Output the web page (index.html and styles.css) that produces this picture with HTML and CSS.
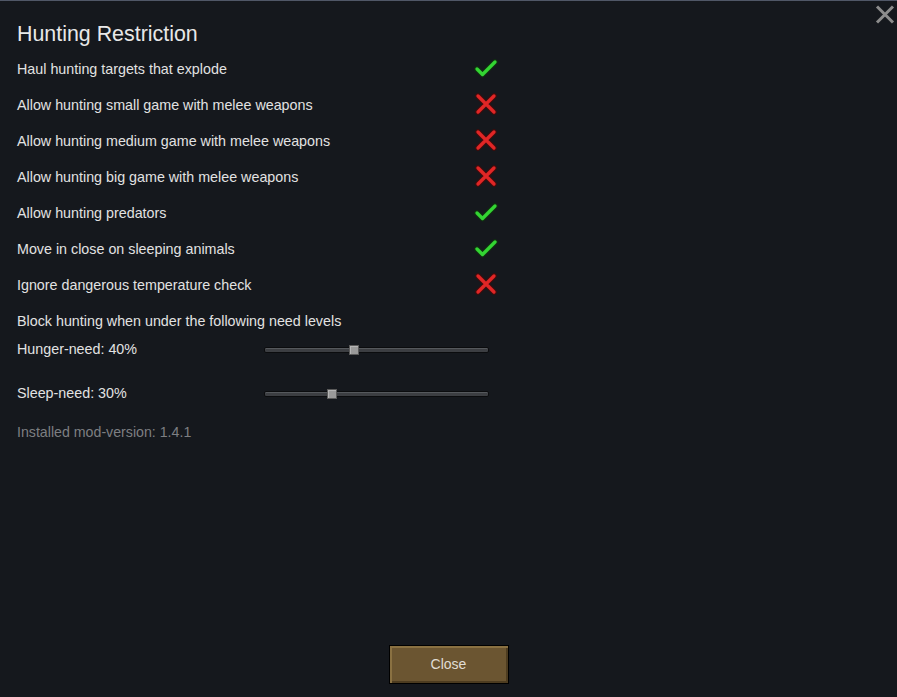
FILE: index.html
```html
<!DOCTYPE html>
<html>
<head>
<meta charset="utf-8">
<link rel="stylesheet" href="styles.css">
</head>
<body>
<div class="window">
  <button class="close-x" aria-label="close">
    <svg width="20" height="19" viewBox="0 0 20 19"><path d="M2 1.5 L18 17.5 M18 1.5 L2 17.5" stroke="#8c8c8c" stroke-width="3" fill="none"/></svg>
  </button>
  <h1 class="title">Hunting Restriction</h1>
  <div class="options">
    <div class="row"><span>Haul hunting targets that explode</span><span class="icon ok"></span></div>
    <div class="row"><span>Allow hunting small game with melee weapons</span><span class="icon no"></span></div>
    <div class="row"><span>Allow hunting medium game with melee weapons</span><span class="icon no"></span></div>
    <div class="row"><span>Allow hunting big game with melee weapons</span><span class="icon no"></span></div>
    <div class="row"><span>Allow hunting predators</span><span class="icon ok"></span></div>
    <div class="row"><span>Move in close on sleeping animals</span><span class="icon ok"></span></div>
    <div class="row"><span>Ignore dangerous temperature check</span><span class="icon no"></span></div>
    <div class="row"><span>Block hunting when under the following need levels</span></div>
  </div>
  <div class="slider-row hunger"><span class="label">Hunger-need: 40%</span><div class="track"><div class="thumb" style="left: 40%"></div></div></div>
  <div class="slider-row sleep"><span class="label">Sleep-need: 30%</span><div class="track"><div class="thumb" style="left: 30%"></div></div></div>
  <div class="version">Installed mod-version: 1.4.1</div>
  <div class="spacer"></div>
  <div class="footer"><button class="close-btn">Close</button></div>
</div>
</body>
</html>
```
FILE: styles.css
```css
html, body {
  margin: 0;
  padding: 0;
  background: #15181d;
}
body {
  font-family: "Liberation Sans", Arial, sans-serif;
  color: #e2e2e2;
}
.window {
  position: relative;
  width: 897px;
  height: 697px;
  box-sizing: border-box;
  border-top: 1px solid #505767;
  padding-left: 17px;
  display: flex;
  flex-direction: column;
}
.close-x {
  position: absolute;
  top: 3px;
  right: 1px;
  width: 22px;
  height: 21px;
  padding: 0;
  border: 0;
  background: none;
  display: flex;
  align-items: center;
  justify-content: center;
}
.title {
  margin: 21px 0 0 0;
  font-size: 21.4px;
  font-weight: normal;
  line-height: 24px;
  height: 24px;
  color: #e8e8e8;
}
.options {
  margin-top: 4px;
  display: flex;
  flex-direction: column;
}
.row {
  height: 36px;
  display: grid;
  grid-template-columns: 457px 24px;
  align-items: center;
  font-size: 14.3px;
  line-height: 18px;
  padding-top: 1px;
  box-sizing: border-box;
}
.icon {
  width: 24px;
  height: 22px;
  margin-top: -1px;
  background-repeat: no-repeat;
  background-position: center;
}
.icon.ok {
  background-image: url("data:image/svg+xml,%3Csvg xmlns='http://www.w3.org/2000/svg' width='24' height='22' viewBox='0 0 24 22'%3E%3Cpath d='M3 12 L8.5 17.5 L21 5' stroke='%23103010' stroke-width='5.6' fill='none' stroke-linecap='round' stroke-linejoin='round'/%3E%3Cpath d='M3 12 L8.5 17.5 L21 5' stroke='%2333d433' stroke-width='3.3' fill='none' stroke-linecap='round' stroke-linejoin='round'/%3E%3C/svg%3E");
}
.icon.no {
  background-image: url("data:image/svg+xml,%3Csvg xmlns='http://www.w3.org/2000/svg' width='24' height='22' viewBox='0 0 24 22'%3E%3Cpath d='M4 3 L20 19 M20 3 L4 19' stroke='%23400c0c' stroke-width='5.6' fill='none' stroke-linecap='round'/%3E%3Cpath d='M4 3 L20 19 M20 3 L4 19' stroke='%23e02626' stroke-width='3.3' fill='none' stroke-linecap='round'/%3E%3C/svg%3E");
}
.slider-row {
  height: 20px;
  display: grid;
  grid-template-columns: 247px 225px;
  align-items: center;
  font-size: 14.3px;
  line-height: 18px;
}
.label {
  padding-top: 1px;
}
.slider-row.sleep {
  margin-top: 24px;
}
.track {
  position: relative;
  height: 6px;
  margin-top: 4px;
  box-sizing: border-box;
  background: #3c3e42;
  border: 1px solid #0b0c0e;
  border-radius: 2px;
  box-shadow: inset 0 1px 0 #55585c;
}
.thumb {
  position: absolute;
  top: -3px;
  width: 10px;
  height: 10px;
  margin-left: -5px;
  box-sizing: border-box;
  background: #9a9a9a;
  border: 1px solid #5a5a5a;
  box-shadow: inset 1px 1px 0 #b5b5b5;
}
.version {
  margin-top: 20px;
  height: 20px;
  line-height: 20px;
  font-size: 14.2px;
  color: #7d7f82;
}
.spacer {
  flex: 1;
}
.footer {
  display: flex;
  justify-content: center;
  padding-right: 17px;
  margin-bottom: 13px;
}
.close-btn {
  width: 120px;
  height: 39px;
  box-sizing: border-box;
  font-family: "Liberation Sans", Arial, sans-serif;
  font-size: 14px;
  color: #e0ddd5;
  background: #6b5531;
  border: 1px solid #000;
  box-shadow: inset 2px 2px 0 #8a7142, inset -2px -2px 0 #4d3c20;
  padding: 0 0 2px 0;
}
```
